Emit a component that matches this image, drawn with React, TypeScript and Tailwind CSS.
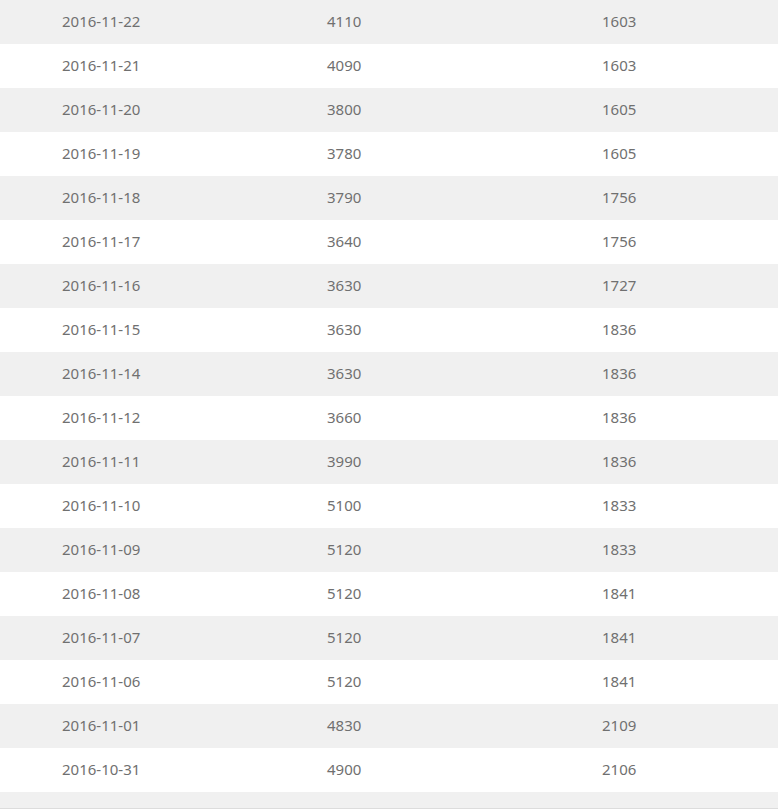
import React from 'react';

const rows: [string, string, string][] = [
  ['2016-11-22', '4110', '1603'],
  ['2016-11-21', '4090', '1603'],
  ['2016-11-20', '3800', '1605'],
  ['2016-11-19', '3780', '1605'],
  ['2016-11-18', '3790', '1756'],
  ['2016-11-17', '3640', '1756'],
  ['2016-11-16', '3630', '1727'],
  ['2016-11-15', '3630', '1836'],
  ['2016-11-14', '3630', '1836'],
  ['2016-11-12', '3660', '1836'],
  ['2016-11-11', '3990', '1836'],
  ['2016-11-10', '5100', '1833'],
  ['2016-11-09', '5120', '1833'],
  ['2016-11-08', '5120', '1841'],
  ['2016-11-07', '5120', '1841'],
  ['2016-11-06', '5120', '1841'],
  ['2016-11-01', '4830', '2109'],
  ['2016-10-31', '4900', '2106'],
];

export default function App() {
  return (
    <div className="w-[778px] h-[809px] overflow-hidden bg-white text-[15px] text-[#707070] font-['Noto_Sans',sans-serif]">
      {rows.map(([date, a, b], i) => (
        <div
          key={date}
          className={`grid grid-cols-[327px_275px_1fr] h-[44px] pb-[2px] items-center ${i % 2 === 0 ? 'bg-[#f0f0f0]' : 'bg-white'}`}
        >
          <span className="pl-[62px]">{date}</span>
          <span>{a}</span>
          <span>{b}</span>
        </div>
      ))}
      <div className="h-[17px] bg-[#f0f0f0] border-b border-[#dcdcdc]" />
    </div>
  );
}
